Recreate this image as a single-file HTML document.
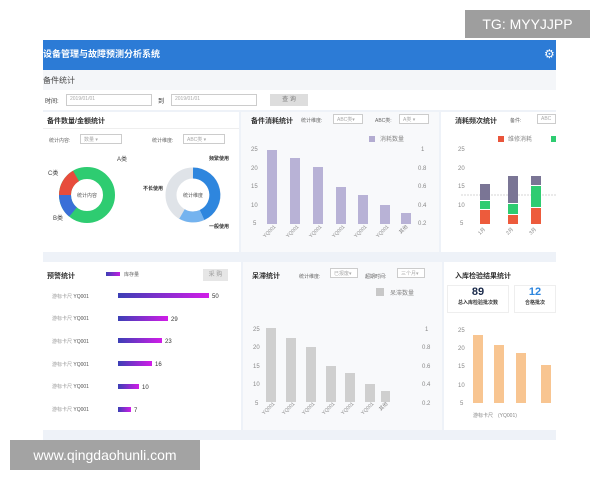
<!DOCTYPE html><html><head><meta charset="utf-8"><style>
*{margin:0;padding:0;box-sizing:border-box}
body{width:600px;height:480px;background:#fff;position:relative;overflow:hidden;font-family:"Liberation Sans","Noto Sans CJK SC",sans-serif;color:#333}
.a{position:absolute}
.p{position:absolute;background:#fff}
.t{font-size:7px;font-weight:bold;color:#333}
.s{font-size:5px;color:#666}
.sel{position:absolute;border:1px solid #ccc;height:10px;font-size:5px;color:#aaa;padding:1px 3px;background:#fff}
.lb{position:absolute;left:52px;font-size:5px;color:#999}
.lb span{color:#555}
</style></head><body>
<div class="a" style="left:43px;top:40px;width:513px;height:400px;background:#eef2f8"></div>
<div class="a" style="left:43px;top:40px;width:513px;height:30px;background:#2c7bd6"></div>
<div class="a" style="left:43px;top:47px;color:#fff;font-size:9px;font-weight:bold">设备管理与故障预测分析系统</div>
<div class="a" style="left:544px;top:47px;color:#fff;font-size:12px">⚙</div>
<div class="a" style="left:43px;top:70px;width:513px;height:20px;background:#f4f6f9"></div>
<div class="a" style="left:43px;top:75px;font-size:8px;color:#444">备件统计</div>
<div class="a" style="left:43px;top:90px;width:513px;height:20px;background:#fff"></div>
<div class="a" style="left:45px;top:96px;font-size:6px">时间:</div>
<div class="sel" style="left:66px;top:94px;width:86px;height:12px">2019/01/01</div>
<div class="a" style="left:158px;top:96px;font-size:6px">到</div>
<div class="sel" style="left:171px;top:94px;width:86px;height:12px">2019/01/01</div>
<div class="a" style="left:270px;top:94px;width:38px;height:12px;background:#ddd;font-size:6px;color:#777;text-align:center;line-height:12px">查 询</div>

<div class="p" style="left:43px;top:112px;width:196px;height:140px"></div>
<div class="a t" style="left:47px;top:116px">备件数量/金额统计</div>
<div class="a" style="left:43px;top:128px;width:196px;height:1px;background:#eee"></div>
<div class="a s" style="left:49px;top:137px">统计内容:</div><div class="sel" style="left:80px;top:134px;width:42px">数量 ▾</div>
<div class="a s" style="left:152px;top:137px">统计维度:</div><div class="sel" style="left:183px;top:134px;width:42px">ABC类 ▾</div>
<svg class="a" style="left:43px;top:150px" width="196" height="100">
<circle cx="44" cy="45" r="22" fill="none" stroke="#2ecc71" stroke-width="12"/>
<path d="M22 45 A22 22 0 0 1 33 26" fill="none" stroke="#e74c3c" stroke-width="12"/>
<path d="M22 45 A22 22 0 0 0 30 62" fill="none" stroke="#3a6fd8" stroke-width="12"/>
<text x="44" y="47" font-size="5" text-anchor="middle" fill="#555">统计内容</text>
<text x="74" y="11" font-size="6" fill="#444">A类</text><text x="5" y="25" font-size="6" fill="#444">C类</text><text x="10" y="70" font-size="6" fill="#444">B类</text>
<circle cx="150" cy="45" r="22" fill="none" stroke="#dfe3e8" stroke-width="11"/>
<path d="M150 23 A22 22 0 0 1 159 65" fill="none" stroke="#2e86de" stroke-width="11"/>
<path d="M159 65 A22 22 0 0 1 139 64" fill="none" stroke="#74b3ef" stroke-width="11"/>
<text x="150" y="47" font-size="5" text-anchor="middle" fill="#555">统计维度</text>
<text x="166" y="10" font-size="5" fill="#333" font-weight="bold">频繁使用</text><text x="100" y="40" font-size="5" fill="#333" font-weight="bold">不长使用</text><text x="166" y="78" font-size="5" fill="#333" font-weight="bold">一般使用</text>
</svg>

<div class="p" style="left:241px;top:112px;width:198px;height:140px;background:#f8f9fb"></div>
<div class="a t" style="left:251px;top:116px">备件消耗统计</div>
<div class="a s" style="left:301px;top:117px">统计维度:</div><div class="sel" style="left:333px;top:114px;width:30px">ABC类▾</div>
<div class="a s" style="left:375px;top:117px">ABC类:</div><div class="sel" style="left:399px;top:114px;width:30px">A类 ▾</div>
<svg class="a" style="left:241px;top:130px" width="198" height="122" font-size="6" fill="#888">
<rect x="128" y="6" width="6" height="6" fill="#b3acd1"/><text x="139" y="11">消耗数量</text>
<text x="10" y="21">25</text><text x="10" y="40">20</text><text x="10" y="58">15</text><text x="10" y="77">10</text><text x="12" y="95">5</text>
<text x="180" y="21">1</text><text x="177" y="40">0.8</text><text x="177" y="58">0.6</text><text x="177" y="77">0.4</text><text x="177" y="95">0.2</text>
<g fill="#b8b2d6"><rect x="26" y="20" width="10" height="74"/><rect x="49" y="28" width="10" height="66"/><rect x="72" y="37" width="10" height="57"/><rect x="95" y="57" width="10" height="37"/><rect x="117" y="65" width="10" height="29"/><rect x="139" y="75" width="10" height="19"/><rect x="160" y="83" width="10" height="11"/></g>
<g font-size="5"><text transform="translate(24,108) rotate(-45)">YQ001</text><text transform="translate(47,108) rotate(-45)">YQ001</text><text transform="translate(70,108) rotate(-45)">YQ001</text><text transform="translate(93,108) rotate(-45)">YQ001</text><text transform="translate(115,108) rotate(-45)">YQ001</text><text transform="translate(137,108) rotate(-45)">YQ001</text><text transform="translate(160,104) rotate(-45)">其他</text></g>
</svg>

<div class="p" style="left:441px;top:112px;width:115px;height:140px"></div>
<div class="a t" style="left:455px;top:116px">消耗频次统计</div>
<div class="a s" style="left:510px;top:117px">备件:</div><div class="sel" style="left:537px;top:114px;width:19px">ABC</div>
<svg class="a" style="left:441px;top:130px" width="115" height="122" font-size="6" fill="#888">
<rect x="57" y="6" width="6" height="6" fill="#e9553b"/><text x="67" y="11">维修消耗</text><rect x="110" y="6" width="6" height="6" fill="#2ecc71"/>
<text x="17" y="21">25</text><text x="17" y="40">20</text><text x="17" y="58">15</text><text x="17" y="77">10</text><text x="19" y="95">5</text>
<line x1="20" y1="65" x2="115" y2="65" stroke="#aaa" stroke-dasharray="2,1" stroke-width="0.6"/>
<rect x="39" y="54" width="10" height="16" fill="#7a7595"/><rect x="39" y="71" width="10" height="8" fill="#2ecc71"/><rect x="39" y="80" width="10" height="14" fill="#ed5b3c"/>
<rect x="67" y="46" width="10" height="27" fill="#7a7595"/><rect x="67" y="74" width="10" height="10" fill="#2ecc71"/><rect x="67" y="85" width="10" height="9" fill="#ed5b3c"/>
<rect x="90" y="46" width="10" height="9" fill="#7a7595"/><rect x="90" y="56" width="10" height="21" fill="#2ecc71"/><rect x="90" y="78" width="10" height="16" fill="#ed5b3c"/>
<g font-size="5"><text transform="translate(39,105) rotate(-45)">1月</text><text transform="translate(67,105) rotate(-45)">2月</text><text transform="translate(90,105) rotate(-45)">3月</text></g>
</svg>

<div class="p" style="left:43px;top:262px;width:198px;height:168px"></div>
<div class="a t" style="left:47px;top:271px">预警统计</div>
<div class="a" style="left:106px;top:272px;width:14px;height:4px;background:linear-gradient(90deg,#3b3fb5,#c21ee0)"></div>
<div class="a s" style="left:124px;top:271px">库存量</div>
<div class="a" style="left:203px;top:269px;width:25px;height:12px;background:#e6e6e6;font-size:6px;color:#999;text-align:center;line-height:12px">采 购</div>
<div class="lb" style="top:293px">游标卡尺 <span>YQ001</span></div>
<div class="lb" style="top:315px">游标卡尺 <span>YQ001</span></div>
<div class="lb" style="top:338px">游标卡尺 <span>YQ001</span></div>
<div class="lb" style="top:361px">游标卡尺 <span>YQ001</span></div>
<div class="lb" style="top:383px">游标卡尺 <span>YQ001</span></div>
<div class="lb" style="top:406px">游标卡尺 <span>YQ001</span></div>
<svg class="a" style="left:110px;top:290px" width="130" height="130" font-size="6" fill="#333">
<defs><linearGradient id="g"><stop offset="0" stop-color="#3b3fb5"/><stop offset="1" stop-color="#d21ce8"/></linearGradient></defs>
<rect x="8" y="3" width="91" height="5" fill="url(#g)"/><text x="102" y="8">50</text>
<rect x="8" y="26" width="50" height="5" fill="url(#g)"/><text x="61" y="31">29</text>
<rect x="8" y="48" width="44" height="5" fill="url(#g)"/><text x="55" y="53">23</text>
<rect x="8" y="71" width="34" height="5" fill="url(#g)"/><text x="45" y="76">16</text>
<rect x="8" y="94" width="21" height="5" fill="url(#g)"/><text x="32" y="99">10</text>
<rect x="8" y="117" width="13" height="5" fill="url(#g)"/><text x="24" y="122">7</text>
</svg>

<div class="p" style="left:243px;top:262px;width:199px;height:168px;background:#f8f9fb"></div>
<div class="a t" style="left:252px;top:271px">呆滞统计</div>
<div class="a s" style="left:299px;top:273px">统计维度:</div><div class="sel" style="left:330px;top:268px;width:28px">已报废▾</div>
<div class="a s" style="left:365px;top:273px">超期时间:</div><div class="sel" style="left:397px;top:268px;width:28px">三个月▾</div>
<svg class="a" style="left:243px;top:285px" width="199" height="145" font-size="6" fill="#888">
<rect x="133" y="3" width="8" height="8" fill="#c8c8c8"/><text x="147" y="10">呆滞数量</text>
<text x="10" y="46">25</text><text x="10" y="64">20</text><text x="10" y="83">15</text><text x="10" y="101">10</text><text x="12" y="120">5</text>
<text x="182" y="46">1</text><text x="179" y="64">0.8</text><text x="179" y="83">0.6</text><text x="179" y="101">0.4</text><text x="179" y="120">0.2</text>
<g fill="#cfcfcf"><rect x="23" y="43" width="10" height="74"/><rect x="43" y="53" width="10" height="64"/><rect x="63" y="62" width="10" height="55"/><rect x="83" y="81" width="10" height="36"/><rect x="102" y="88" width="10" height="29"/><rect x="122" y="99" width="10" height="18"/><rect x="138" y="106" width="9" height="11"/></g>
<g font-size="5"><text transform="translate(21,130) rotate(-45)">YQ001</text><text transform="translate(41,130) rotate(-45)">YQ001</text><text transform="translate(61,130) rotate(-45)">YQ001</text><text transform="translate(81,130) rotate(-45)">YQ001</text><text transform="translate(100,130) rotate(-45)">YQ001</text><text transform="translate(120,130) rotate(-45)">YQ001</text><text transform="translate(138,126) rotate(-45)">其他</text></g>
</svg>

<div class="p" style="left:444px;top:262px;width:112px;height:168px"></div>
<div class="a t" style="left:455px;top:271px">入库检验结果统计</div>
<div class="a" style="left:447px;top:285px;width:62px;height:28px;background:#fff;border:1px solid #eee;text-align:center"><div style="font-size:11px;font-weight:bold;color:#1a2a4a;line-height:13px">89</div><div style="font-size:5px;font-weight:bold">总入库检验批次数</div></div>
<div class="a" style="left:514px;top:285px;width:42px;height:28px;background:#fff;border:1px solid #eee;text-align:center"><div style="font-size:11px;font-weight:bold;color:#2e86de;line-height:13px">12</div><div style="font-size:5px;font-weight:bold">合格批次</div></div>
<svg class="a" style="left:444px;top:315px" width="112" height="115" font-size="6" fill="#888">
<text x="14" y="17">25</text><text x="14" y="35">20</text><text x="14" y="53">15</text><text x="14" y="72">10</text><text x="16" y="90">5</text>
<g fill="#f8c591"><rect x="29" y="20" width="10" height="68"/><rect x="50" y="30" width="10" height="58"/><rect x="72" y="38" width="10" height="50"/><rect x="97" y="50" width="10" height="38"/></g>
<text x="29" y="102" font-size="5">游标卡尺　(YQ001)</text>
</svg>

<div class="a" style="left:465px;top:10px;width:125px;height:28px;background:#9e9e9e;color:#fff;font-size:14px;line-height:28px;text-align:center">TG: MYYJJPP</div>
<div class="a" style="left:10px;top:440px;width:190px;height:30px;background:#a3a3a3;color:#fff;font-size:14px;line-height:30px;text-align:center">www.qingdaohunli.com</div>
</body></html>
